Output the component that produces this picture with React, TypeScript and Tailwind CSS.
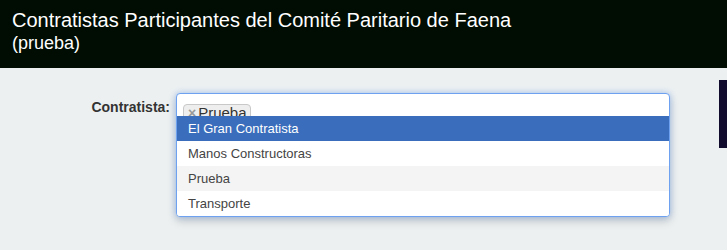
import React from 'react';

const options = [
  { label: 'El Gran Contratista', state: 'highlighted' },
  { label: 'Manos Constructoras', state: 'none' },
  { label: 'Prueba', state: 'selected' },
  { label: 'Transporte', state: 'none' },
];

function OptionRow({ label, state }: { label: string; state: string }) {
  const tone =
    state === 'highlighted'
      ? 'bg-[#3a6ebc] text-white'
      : state === 'selected'
        ? 'bg-[#f4f4f4] text-[#444]'
        : 'bg-white text-[#444]';
  return (
    <li className={`h-[25px] pl-[11px] text-[13px] leading-[25px] ${tone}`}>
      {label}
    </li>
  );
}

function ContratistaSelect() {
  return (
    <div className="relative h-[28px] w-[494px]">
      <div className="absolute left-0 right-0 top-0 z-10 rounded-[4px] border border-[#6ea2f0] bg-white shadow-[0_0_6px_rgba(88,151,251,0.45),0_4px_10px_rgba(0,0,0,0.18)]">
        <div className="h-[22px] overflow-hidden pl-[6px] pt-[7px]">
          <span className="inline-block h-[22px] rounded-[4px] border border-[#c8c8c8] bg-[#eeeeee] pl-[4px] pr-[3px] text-[15px] leading-[16px] text-[#333]">
            <span className="mr-[2px] text-[14px] font-bold text-[#999]">×</span>
            Prueba
          </span>
        </div>
        <ul className="overflow-hidden rounded-b-[3px]">
          {options.map((o) => (
            <OptionRow key={o.label} label={o.label} state={o.state} />
          ))}
        </ul>
      </div>
    </div>
  );
}

export default function App() {
  return (
    <div className="h-[250px] w-[727px] overflow-hidden bg-[#ecf0f1] font-['Liberation_Sans',Arial,sans-serif]">
      <header className="h-[68px] bg-[#010d03] px-[12px] pt-[8px] text-white">
        <h1 className="text-[20px] leading-[24px]">
          Contratistas Participantes del Comité Paritario de Faena
        </h1>
        <p className="text-[18px] leading-[23px]">(prueba)</p>
      </header>
      <div className="flex items-start justify-between pt-[12px]">
        <div className="mt-[13px] flex items-start">
          <label className="w-[170px] pt-[6px] text-right text-[14px] font-bold leading-[16px] text-[#333]">
            Contratista:
          </label>
          <div className="ml-[6px]">
            <ContratistaSelect />
          </div>
        </div>
        <div className="h-[68px] w-[8px] bg-[#110c2e]" />
      </div>
    </div>
  );
}
